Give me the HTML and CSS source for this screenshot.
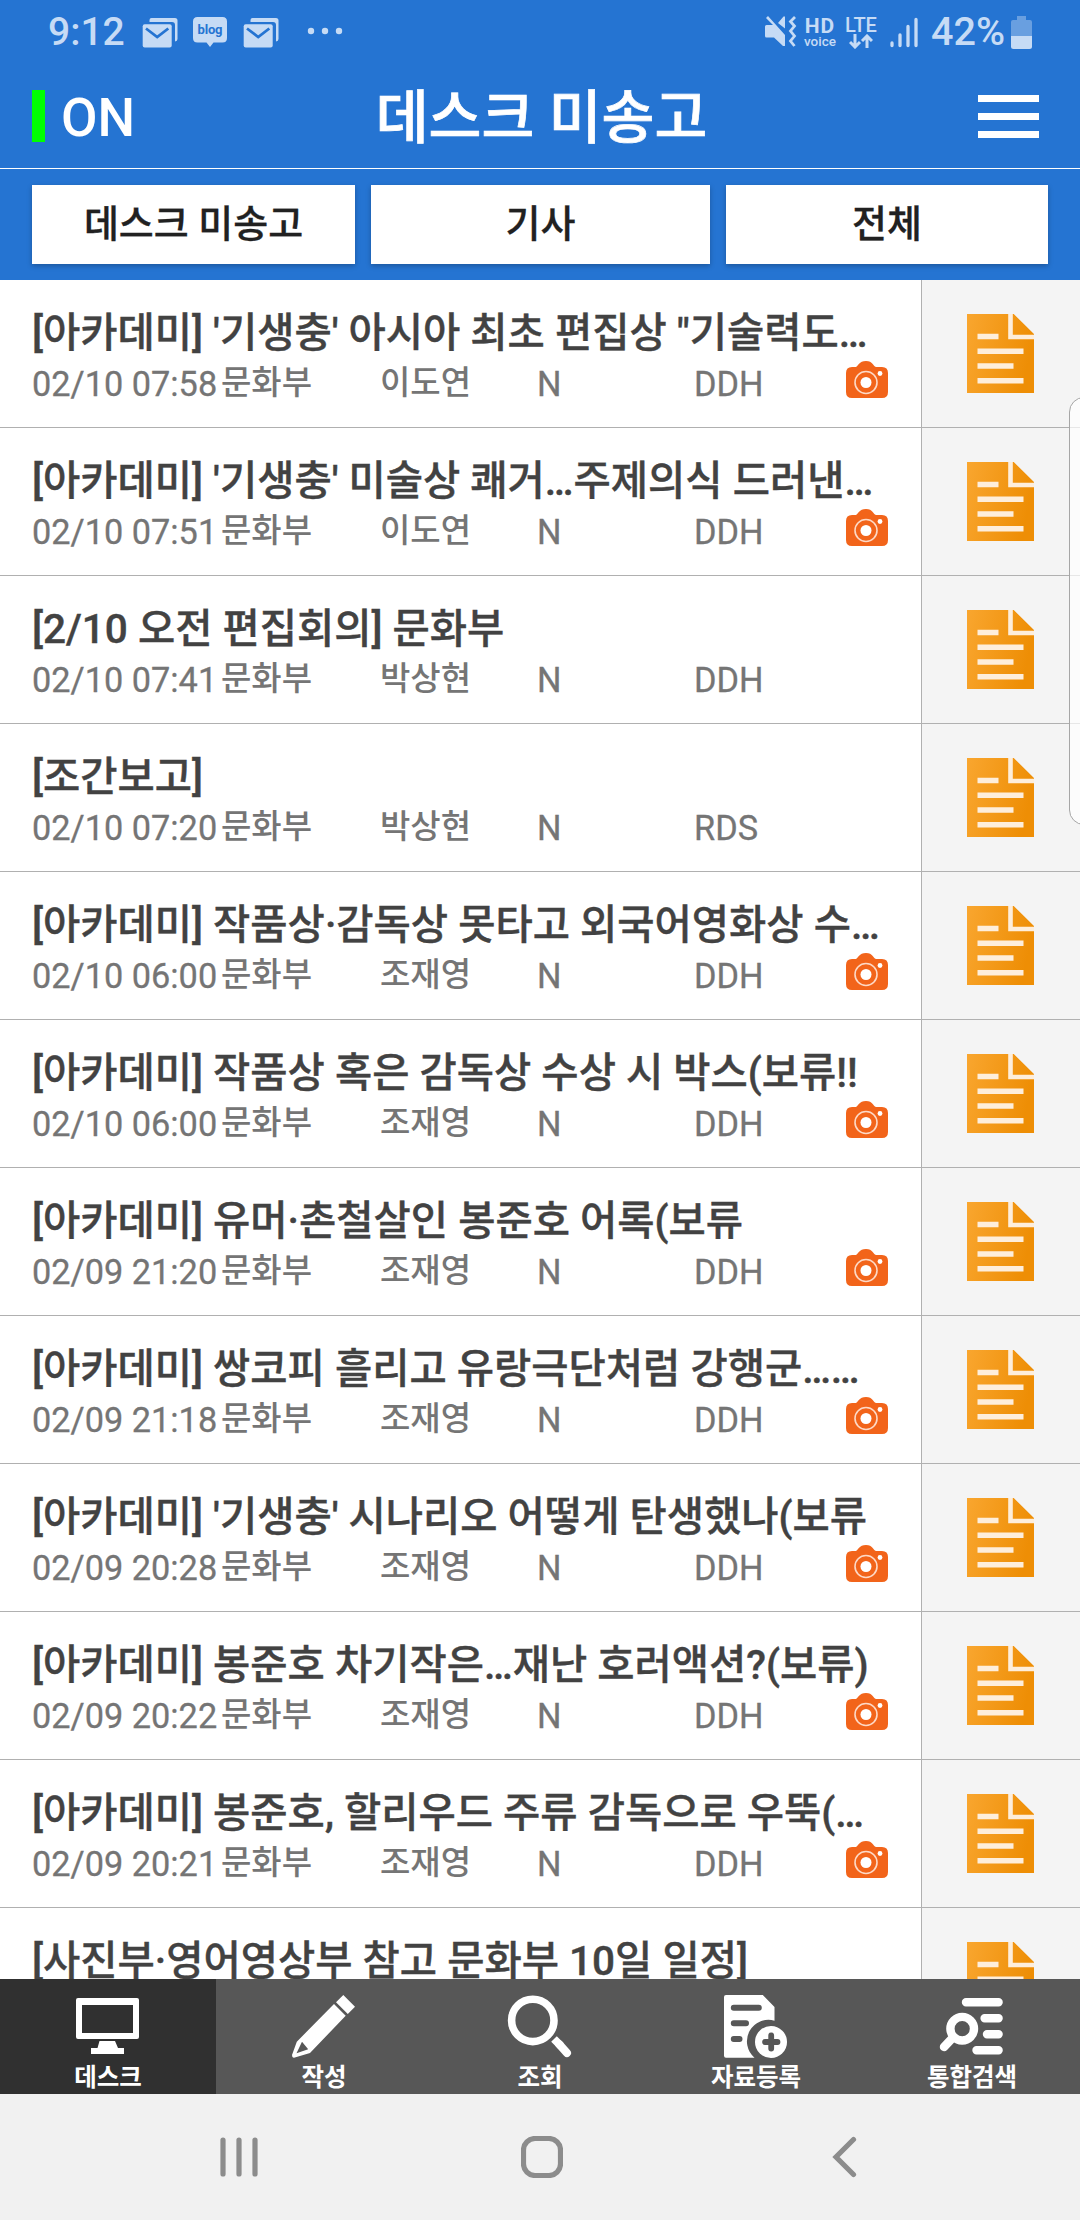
FILE: index.html
```html
<!DOCTYPE html>
<html lang="ko">
<head>
<meta charset="utf-8">
<title>데스크 미송고</title>
<link rel="stylesheet" href="styles.css">
</head>
<body>
<svg class="defs" width="0" height="0" aria-hidden="true">
  <defs>
    <linearGradient id="amber" x1="0" y1="0" x2="1" y2="0.25"><stop offset="0" stop-color="#f9a62f"/><stop offset="1" stop-color="#ee8e05"/></linearGradient>
    <symbol id="doc" viewBox="0 0 67 79">
      <path fill="url(#amber)" d="M0 0H47L67 19.5V79H0Z"/>
      <path fill="#f4f4f4" d="M47 0H67V20Z"/>
      <path d="M43.5 0V23H67" fill="none" stroke="#feeedb" stroke-width="4.6"/>
      <path d="M10.5 22.5H31.500M10.500 37.300H56.500M10.500 52H46.500M10.500 66.700H56.500" stroke="#feeedb" stroke-width="5.600"/>
    </symbol>
    <symbol id="cam" viewBox="0 0 42 38">
      <path fill="#f2641a" d="M6 7H10C12 6 13 1 20 1S27 6 30 7H36Q42 7 42 13V32Q42 38 36 38H6Q0 38 0 32V13Q0 7 6 7Z"/>
      <circle cx="20" cy="22.500" r="11" fill="none" stroke="#fdd9c6" stroke-width="1.600"/>
      <circle cx="20" cy="22.500" r="5.500" fill="#fff"/><circle cx="34" cy="13.500" r="2.400" fill="#fff"/>
    </symbol>
    <symbol id="mail" viewBox="0 0 36 31">
      <path d="M7.500 3Q7.500 1 9.500 1H33Q35.500 1 35.500 3.500V22Q35.500 24 33 24.500V8Q33 5 30 5H7.500Z" fill="currentColor"/>
      <rect x="0.700" y="7.300" width="29" height="23.200" rx="2" fill="currentColor"/>
      <path d="M4 11.500L15.200 20L26.300 11.500" fill="none" stroke="#2574d2" stroke-width="2.800"/>
    </symbol>
  </defs>
</svg>
<div class="screen">
  <header class="header">
    <div class="status">
      <span class="clock">9:12</span>
      <svg class="mail" width="36" height="31"><use href="#mail"/></svg>
      <svg class="blog" width="34" height="30" viewBox="0 0 34 30"><path fill="currentColor" d="M4.500 0H29.500Q34 0 34 4.500V21Q34 25.500 29.500 25.500H20.500L17 30L13.500 25.500H4.500Q0 25.500 0 21V4.500Q0 0 4.500 0Z"/><text x="17" y="16.500" text-anchor="middle" textLength="25">blog</text></svg>
      <svg class="mail" width="36" height="31"><use href="#mail"/></svg>
      <svg class="dots" width="36" height="8" viewBox="0 0 36 8" fill="currentColor"><circle cx="4" cy="4" r="3.200"/><circle cx="18" cy="4" r="3.200"/><circle cx="32" cy="4" r="3.200"/></svg>
      <div class="status-right">
        <svg class="mute" width="33" height="32" viewBox="0 0 33 32"><path fill="currentColor" d="M0 10.500Q0 9 1.500 9H8L1 2L3 0L20 19V30L18 30L9 21.500H1.500Q0 21.500 0 20ZM13 7L18.500 0.500H20V12.500Z"/><path d="M30 1L25.500 5.500L29.500 10L25.500 15L29.500 20L25.500 25L29.500 30" fill="none" stroke="currentColor" stroke-width="2.800"/></svg>
        <span class="hd"><b>HD</b><i>voice</i></span>
        <span class="lte"><b>LTE</b><svg width="24" height="15" viewBox="0 0 24 15" fill="none" stroke="currentColor" stroke-width="3"><path d="M6 0V12M1 8L6 13L11 8M18 14V2M13 7L18 2L23 7"/></svg></span>
        <svg class="signal" width="28" height="31" viewBox="0 0 28 31" stroke="currentColor" stroke-width="3.300" stroke-linecap="round"><path d="M2 26V28.500M10 18V28.500M18 9.500V28.500M26 2.500V28.500"/></svg>
        <span class="pct">42%</span>
        <svg class="battery" width="21" height="33" viewBox="0 0 21 33"><path fill="#699fe0" d="M6 0H15V4H19Q21 4 21 6V20H0V6Q0 4 2 4H6Z"/><path fill="currentColor" d="M0 20H21V30.500Q21 33 18.500 33H2.500Q0 33 0 30.500Z"/></svg>
      </div>
    </div>
    <div class="titlebar">
      <div class="on"><span class="on-mark"></span><span class="on-text">ON</span></div>
      <h1>데스크 미송고</h1>
      <div class="menu"><span></span><span></span><span></span></div>
    </div>
    <div class="filters">
      <div class="filter first">데스크 미송고</div>
      <div class="filter mid">기사</div>
      <div class="filter last">전체</div>
    </div>
  </header>
  <main class="list">
    <div class="row"><div class="main"><p class="t">[아카데미] '기생충' 아시아 최초 편집상 "기술력도…</p><div class="meta"><span class="n">02/10 07:58</span><span>문화부</span><span>이도연</span><span class="n">N</span><span class="n">DDH</span><svg class="cam"><use href="#cam"/></svg></div></div><div class="side"><svg class="doc"><use href="#doc"/></svg></div></div>
    <div class="row"><div class="main"><p class="t">[아카데미] '기생충' 미술상 쾌거…주제의식 드러낸…</p><div class="meta"><span class="n">02/10 07:51</span><span>문화부</span><span>이도연</span><span class="n">N</span><span class="n">DDH</span><svg class="cam"><use href="#cam"/></svg></div></div><div class="side"><svg class="doc"><use href="#doc"/></svg></div></div>
    <div class="row"><div class="main"><p class="t">[2/10 오전 편집회의] 문화부</p><div class="meta"><span class="n">02/10 07:41</span><span>문화부</span><span>박상현</span><span class="n">N</span><span class="n">DDH</span></div></div><div class="side"><svg class="doc"><use href="#doc"/></svg></div></div>
    <div class="row"><div class="main"><p class="t">[조간보고]</p><div class="meta"><span class="n">02/10 07:20</span><span>문화부</span><span>박상현</span><span class="n">N</span><span class="n">RDS</span></div></div><div class="side"><svg class="doc"><use href="#doc"/></svg></div></div>
    <div class="row"><div class="main"><p class="t">[아카데미] 작품상·감독상 못타고 외국어영화상 수…</p><div class="meta"><span class="n">02/10 06:00</span><span>문화부</span><span>조재영</span><span class="n">N</span><span class="n">DDH</span><svg class="cam"><use href="#cam"/></svg></div></div><div class="side"><svg class="doc"><use href="#doc"/></svg></div></div>
    <div class="row"><div class="main"><p class="t">[아카데미] 작품상 혹은 감독상 수상 시 박스(보류!!</p><div class="meta"><span class="n">02/10 06:00</span><span>문화부</span><span>조재영</span><span class="n">N</span><span class="n">DDH</span><svg class="cam"><use href="#cam"/></svg></div></div><div class="side"><svg class="doc"><use href="#doc"/></svg></div></div>
    <div class="row"><div class="main"><p class="t">[아카데미] 유머·촌철살인 봉준호 어록(보류</p><div class="meta"><span class="n">02/09 21:20</span><span>문화부</span><span>조재영</span><span class="n">N</span><span class="n">DDH</span><svg class="cam"><use href="#cam"/></svg></div></div><div class="side"><svg class="doc"><use href="#doc"/></svg></div></div>
    <div class="row"><div class="main"><p class="t">[아카데미] 쌍코피 흘리고 유랑극단처럼 강행군……</p><div class="meta"><span class="n">02/09 21:18</span><span>문화부</span><span>조재영</span><span class="n">N</span><span class="n">DDH</span><svg class="cam"><use href="#cam"/></svg></div></div><div class="side"><svg class="doc"><use href="#doc"/></svg></div></div>
    <div class="row"><div class="main"><p class="t">[아카데미] '기생충' 시나리오 어떻게 탄생했나(보류</p><div class="meta"><span class="n">02/09 20:28</span><span>문화부</span><span>조재영</span><span class="n">N</span><span class="n">DDH</span><svg class="cam"><use href="#cam"/></svg></div></div><div class="side"><svg class="doc"><use href="#doc"/></svg></div></div>
    <div class="row"><div class="main"><p class="t">[아카데미] 봉준호 차기작은…재난 호러액션?(보류)</p><div class="meta"><span class="n">02/09 20:22</span><span>문화부</span><span>조재영</span><span class="n">N</span><span class="n">DDH</span><svg class="cam"><use href="#cam"/></svg></div></div><div class="side"><svg class="doc"><use href="#doc"/></svg></div></div>
    <div class="row"><div class="main"><p class="t">[아카데미] 봉준호, 할리우드 주류 감독으로 우뚝(…</p><div class="meta"><span class="n">02/09 20:21</span><span>문화부</span><span>조재영</span><span class="n">N</span><span class="n">DDH</span><svg class="cam"><use href="#cam"/></svg></div></div><div class="side"><svg class="doc"><use href="#doc"/></svg></div></div>
    <div class="row"><div class="main"><p class="t">[사진부·영어영상부 참고 문화부 10일 일정]</p></div><div class="side"><svg class="doc"><use href="#doc"/></svg></div></div>
  </main>
  <nav class="tabs">
    <div class="tab active"><svg viewBox="0 0 72 66"><path fill="#fff" fill-rule="evenodd" d="M6 4H65Q67 4 67 6V43Q67 45 65 45H6Q4 45 4 43V6Q4 4 6 4ZM10 11V39H61V11Z"/><path fill="#fff" d="M27.500 47H43L46 54H52V60H19V54H25.500Z"/></svg><span>데스크</span></div>
    <div class="tab"><svg viewBox="0 0 72 66"><path fill="#fff" fill-rule="evenodd" d="M55.300 1L67 12.700L59.800 20L48 8.300ZM46 10L57.700 21.700L22 59L6 63.700Q4 64 4 61L8.800 47.700ZM14 47.700L8.500 59.300L20.200 55.300Z"/></svg><span>작성</span></div>
    <div class="tab"><svg viewBox="0 0 72 66" fill="none" stroke="#fff"><circle cx="28.800" cy="26.400" r="21.200" stroke-width="7.600"/><path d="M50 45L57 52" stroke-width="8"/><path d="M55 50L63 59" stroke-width="8" stroke-linecap="round"/></svg><span>조회</span></div>
    <div class="tab"><svg viewBox="0 0 72 66"><path fill="#fff" d="M6 1H42.800L54.500 13V26.700A21.500 21.500 0 0 0 34.500 63.700H6Q4 63.700 4 61.700V3Q4 1 6 1Z"/><path d="M13.800 13.700H38.800M13.800 29.300H26M13.800 45H19.500" stroke="#575757" stroke-width="6" stroke-linecap="round"/><circle cx="51" cy="48" r="16" fill="#fff"/><path d="M45 48H57.500M51.200 41.500V54.500" stroke="#575757" stroke-width="5.800" stroke-linecap="round"/></svg><span>자료등록</span></div>
    <div class="tab"><svg viewBox="0 0 72 66" fill="none" stroke="#fff" stroke-width="8.400" stroke-linecap="round"><path d="M30 8.300H62.600M48.600 24.300H62.600M51 40.300H62.600M40.500 56.300H62.600M16 44.500L8 53"/><circle cx="26.200" cy="34.700" r="11.800"/></svg><span>통합검색</span></div>
  </nav>
  <footer class="sysnav">
    <svg width="38" height="42" viewBox="0 0 38 42" stroke-linecap="round"><path d="M3 4V38M19 4V38M35 4V38"/></svg>
    <svg width="42" height="42" viewBox="0 0 42 42"><rect x="2.500" y="2.500" width="37" height="37" rx="11.500"/></svg>
    <svg width="38" height="42" viewBox="0 0 38 42" stroke-linecap="round"><path d="M28.500 3.500L11 21L28.500 38.500"/></svg>
  </footer>
  <div class="edge-panel"></div>
</div>
</body>
</html>
```
FILE: styles.css
```css
* { box-sizing: border-box; }
body { margin: 0; font-family: Roboto, "Noto Sans CJK KR", sans-serif; font-weight: 500; background: #fff; }
.defs { display: block; position: absolute; }
.screen { position: relative; width: 1080px; height: 2220px; display: flex; flex-direction: column; overflow: hidden; }
.header { height: 280px; background: #2574d2; color: #fff; }
.status { height: 64px; padding: 0 48px; display: flex; align-items: center; color: #c6dbf5; }
.status svg { flex: none; }
.clock { width: 94px; font-size: 39px; line-height: 68px; }
.mail { margin-right: 15px; }
.blog { margin-right: 16px; }
.blog text { font: 700 13px Roboto, sans-serif; fill: #2574d2; }
.dots { margin: 0 0 2px 13px; }
.status-right { margin-left: auto; height: 64px; display: flex; align-items: center; }
.mute { margin-right: 5px; }
.hd, .lte { display: flex; flex-direction: column; align-items: center; }
.hd { width: 34px; margin-right: 8px; }
.hd b { font-size: 21px; line-height: 18px; font-weight: 700; letter-spacing: 1px; }
.hd i { font-size: 13.500px; line-height: 13px; font-style: normal; font-weight: 500; }
.lte { width: 32px; margin-right: 13px; }
.lte b { font-size: 20px; line-height: 18px; font-weight: 500; }
.signal { margin-right: 13px; }
.pct { width: 80px; font-size: 39.500px; line-height: 68px; }
.titlebar { height: 105px; border-bottom: 1px solid #fff; display: grid; grid-template-columns: 203px 1fr 191px; align-items: center; padding: 0 41px 0 32px; }
.on { display: flex; align-items: center; height: 52px; }
.on-mark { width: 13px; height: 52px; background: #0f0; margin-right: 16px; }
.on-text { font-size: 53px; line-height: 52px; padding-top: 3px; }
h1 { margin: 0; font-size: 57.500px; line-height: 84px; padding-top: 5px; font-weight: 500; text-align: center; white-space: nowrap; -webkit-text-stroke: .7px currentColor; }
.menu { justify-self: end; width: 61px; display: flex; flex-direction: column; gap: 11px; }
.menu span { height: 7px; background: #fff; }
.filters { display: grid; grid-template-columns: 323px 339px 322px; gap: 16px; padding: 16px 32px; height: 111px; }
.filter { height: 79px; background: #fff; color: #212121; font-size: 38px; line-height: 79px; text-align: center; box-shadow: 0 2px 5px rgba(0, 0, 0, .25); -webkit-text-stroke: .3px currentColor; }
.list { height: 1699px; overflow: hidden; }
.row { height: 148px; display: flex; border-bottom: 1px solid #b0b0b0; }
.main { width: 921px; padding: 24px 32px 0; }
.side { width: 159px; border-left: 1px solid #b0b0b0; background: #f4f4f4; display: flex; justify-content: center; align-items: center; padding-right: 1px; }
.doc { width: 67px; height: 79px; }
.t { margin: 0; color: #424242; font-size: 40.500px; line-height: 58px; height: 56px; white-space: nowrap; -webkit-text-stroke: .4px currentColor; }
.meta { display: grid; grid-template-columns: 189px 159px 157px 157px 152px 42px; color: #757575; font-size: 33px; line-height: 46px; height: 46px; white-space: nowrap; }
.n { font-size: 34.300px; font-weight: 400; line-height: 48px; -webkit-text-stroke: .3px currentColor; }
.cam { width: 42px; height: 38px; }
.tabs { height: 115px; display: grid; grid-template-columns: repeat(5, 1fr); background: #575757; color: #fff; }
.tab { display: flex; flex-direction: column; align-items: center; padding-top: 15px; }
.tab.active { background: #303030; }
.tab svg { width: 72px; height: 66px; flex: none; }
.tab span { font-size: 24.500px; line-height: 36px; font-weight: 700; }
.sysnav { height: 126px; background: #f1f1f1; display: flex; justify-content: space-between; align-items: center; padding: 0 217px 0 220px; }
.sysnav svg { fill: none; stroke: #8c8c8c; stroke-width: 5.200px; }
.edge-panel { position: absolute; left: 1069px; top: 397px; width: 30px; height: 428px; border: 1px solid #a6a6a6; border-radius: 15px; background: rgba(255, 255, 255, .7); }
```
